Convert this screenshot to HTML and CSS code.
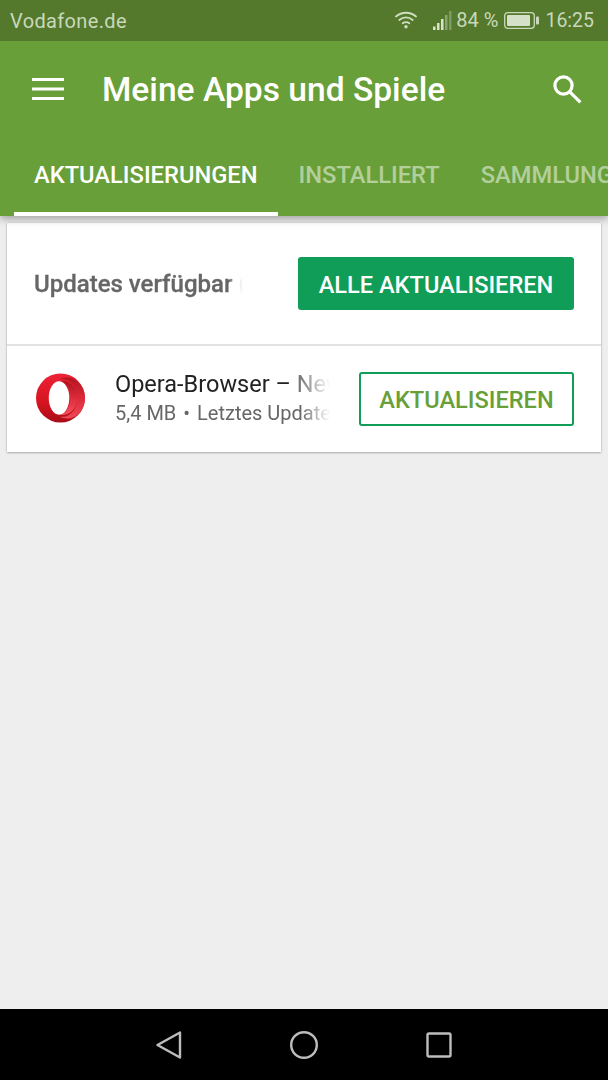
FILE: index.html
```html
<!DOCTYPE html>
<html lang="de">
<head>
<meta charset="utf-8">
<title>Meine Apps und Spiele</title>
<link rel="stylesheet" href="styles.css">
</head>
<body>
<div class="screen">
  <header class="header">
    <div class="status">
      <span class="carrier">Vodafone.de</span>
      <div class="status-right">
        <svg class="wifi" width="22" height="18" viewBox="0 0 22 18" fill="none" stroke="#d0dec2" stroke-width="1.800" stroke-linecap="round">
          <path d="M1 5.500C6.500 .5 15.500 .5 21 5.500"/>
          <path d="M4.300 9C8.300 5.500 13.700 5.500 17.700 9"/>
          <path d="M7.700 12.300C9.700 10.800 12.300 10.800 14.300 12.300"/>
          <circle cx="11" cy="15.800" r="1.700" fill="#d0dec2" stroke="none"/>
        </svg>
        <svg class="signal" width="19" height="19" viewBox="0 0 19 19">
          <rect x="0" y="15.500" width="2.500" height="3.500" fill="#d8e3cc"/>
          <rect x="4" y="12" width="2.500" height="7" fill="#d8e3cc"/>
          <rect x="8" y="8" width="2.500" height="11" fill="#d8e3cc"/>
          <rect x="12" y="4" width="2.500" height="15" fill="#8aa574"/>
          <rect x="16" y="0" width="2.500" height="19" fill="#7d9b66"/>
        </svg>
        <span class="pct">84 %</span>
        <svg class="battery" width="35" height="17" viewBox="0 0 35 17">
          <rect x="0.700" y="0.700" width="29.600" height="15.600" rx="3" fill="none" stroke="#c9d8ba" stroke-width="1.300"/>
          <rect x="3" y="3" width="23" height="11" rx="1" fill="#d4e0c8"/>
          <rect x="32" y="4.500" width="3" height="8" rx="1" fill="#c9d8ba"/>
        </svg>
        <span class="time">16:25</span>
      </div>
    </div>
    <div class="appbar">
      <svg class="menu" width="32" height="22" viewBox="0 0 32 22" fill="#fff">
        <rect x="0" y="0" width="32" height="3"/>
        <rect x="0" y="9.500" width="32" height="3"/>
        <rect x="0" y="19" width="32" height="3"/>
      </svg>
      <h1 class="title">Meine Apps und Spiele</h1>
      <svg class="search" width="30" height="30" viewBox="0 0 30 30" fill="none" stroke="#fff" stroke-width="3.200">
        <circle cx="11.500" cy="11.500" r="8.600"/>
        <path d="M17.800 17.800L28.400 28.400"/>
      </svg>
    </div>
    <nav class="tabs">
      <span class="tab tab-active">AKTUALISIERUNGEN</span>
      <span class="tab">INSTALLIERT</span>
      <span class="tab">SAMMLUNG</span>
    </nav>
  </header>

  <main class="content">
    <section class="card">
      <div class="card-head">
        <span class="avail fade-short">Updates verfügbar (1)</span>
        <button class="btn btn-solid">ALLE AKTUALISIEREN</button>
      </div>
      <div class="row">
        <svg class="opera" width="49" height="50" viewBox="0 0 50 50">
          <defs>
            <linearGradient id="og" x1="0" y1="0" x2="0" y2="1">
              <stop offset="0" stop-color="#ee2238"/>
              <stop offset="0.600" stop-color="#d5141f"/>
              <stop offset="1" stop-color="#a80d18"/>
            </linearGradient>
            <linearGradient id="og2" x1="0" y1="0" x2="0" y2="1">
              <stop offset="0" stop-color="#ad121d"/>
              <stop offset="0.500" stop-color="#dc2c3c"/>
              <stop offset="1" stop-color="#f4505e"/>
            </linearGradient>
          </defs>
          <circle cx="25" cy="25" r="25" fill="url(#og)"/>
          <path d="M24 6C35 4 42 14 42 25C42 36 35 46 24 44C38 51 50 38.500 50 25C50 11.500 38 -1 24 6Z" fill="url(#og2)" opacity=".9"/>
          <path d="M24 8C30 9 35 16 35 25C35 34 30 41 24 42C35 44 42 35 42 25C42 15 35 6 24 8Z" fill="url(#og2)"/>
          <ellipse cx="23.500" cy="25" rx="10.500" ry="17" fill="#fff"/>
        </svg>
        <div class="info">
          <div class="name fade">Opera-Browser – <span class="name-rest">News &amp; Suche</span></div>
          <div class="meta fade">5,4 MB<span class="dot">•</span>Letztes Update: heute</div>
        </div>
        <button class="btn btn-outline">AKTUALISIEREN</button>
      </div>
    </section>
  </main>

  <footer class="navbar">
    <svg width="26" height="28" viewBox="0 0 26 28" fill="none" stroke="#bdbdbd" stroke-width="2.400" stroke-linejoin="round"><path d="M24 1.500V26.500L1.500 14Z"/></svg>
    <svg width="28" height="28" viewBox="0 0 28 28" fill="none" stroke="#bdbdbd" stroke-width="2.400"><circle cx="14" cy="14" r="12.800"/></svg>
    <svg width="26" height="26" viewBox="0 0 26 26" fill="none" stroke="#bdbdbd" stroke-width="2.400" stroke-linejoin="round"><rect x="1.500" y="1.500" width="23" height="23" rx="1.500"/></svg>
  </footer>
</div>
</body>
</html>
```

FILE: styles.css
```css
* { box-sizing: border-box; }
html, body { margin: 0; padding: 0; }
body { font-family: Roboto, "Liberation Sans", sans-serif; background: #eeeeee; }
.screen { width: 608px; height: 1080px; display: flex; flex-direction: column; overflow: hidden; }

.header { background: #689f38; height: 216px; display: flex; flex-direction: column; position: relative; z-index: 1; box-shadow: 0 3px 8px rgba(0,0,0,.32); }
.status { height: 41px; background: #54792d; display: flex; align-items: center; justify-content: space-between; padding: 0 14px 0 10px; color: #c9d8ba; font-size: 20px; flex: none; }
.carrier { letter-spacing: .35px; }
.status-right { display: flex; align-items: center; }
.wifi { margin-right: 16px; margin-top: -1px; }
.signal { margin-right: 4px; margin-top: -1px; }
.pct { margin-right: 6px; margin-top: -2px; }
.battery { margin-right: 6px; }
.time { font-size: 19.500px; }

.appbar { height: 95px; display: flex; align-items: center; padding: 0 26px 0 32px; flex: none; }
.menu { flex: none; margin-right: 38px; }
.title { flex: 1; margin: 0; padding-top: 1px; font-size: 33.600px; font-weight: 500; color: #fff; white-space: nowrap; }
.search { flex: none; }

.tabs { flex: 1; display: flex; padding-left: 14px; white-space: nowrap; overflow: hidden; }
.tab { display: flex; align-items: center; padding: 0 20px 2px; font-size: 23.700px; font-weight: 500; color: rgba(255,255,255,.5); }
.tab + .tab { margin-left: 1px; }
.tab-active { color: #fff; border-bottom: 4px solid #fff; padding-top: 2px; padding-bottom: 0; }

.content { flex: 1; padding: 7px 7px 0; }
.card { background: #fff; box-shadow: 0 1px 2px rgba(0,0,0,.25), 0 0 2px rgba(0,0,0,.12); }
.card-head { height: 123px; display: flex; align-items: center; justify-content: space-between; padding: 0 27px; border-bottom: 2px solid #e2e2e2; }
.avail { width: 209px; font-size: 24px; font-weight: 500; -webkit-text-stroke: .3px #666; color: #666; white-space: nowrap; overflow: hidden; }
.fade { -webkit-mask-image: linear-gradient(to right, #000 calc(100% - 30px), transparent 100%); mask-image: linear-gradient(to right, #000 calc(100% - 30px), transparent 100%); }
.fade-short { -webkit-mask-image: linear-gradient(to right, #000 calc(100% - 14px), rgba(0,0,0,.25) calc(100% - 6px), transparent 100%); mask-image: linear-gradient(to right, #000 calc(100% - 14px), rgba(0,0,0,.25) calc(100% - 6px), transparent 100%); }

.btn { font-family: inherit; font-size: 23.600px; font-weight: 500; border-radius: 3px; white-space: nowrap; padding: 2px 0 0; }
.btn-solid { width: 276px; height: 53px; background: #0f9d58; border: 0; color: #fff; }
.btn-outline { width: 215px; height: 54px; background: #fff; border: 2px solid #0f9d58; color: #689f38; flex: none; margin-top: -1px; }

.row { height: 106px; display: flex; align-items: center; padding: 0 27px 0 29px; }
.opera { flex: none; margin-right: 30px; margin-top: -3px; }
.info { width: 215px; margin-right: 29px; margin-top: -1px; overflow: hidden; }
.name { font-size: 23.500px; color: #222; white-space: nowrap; overflow: hidden; line-height: 29px; }
.name-rest { color: #777; }
.meta { font-size: 20px; color: #666; white-space: nowrap; overflow: hidden; line-height: 28px; }
.dot { margin: 0 7px; }

.navbar { height: 71px; background: #000; display: flex; align-items: center; padding: 0 156px; justify-content: space-between; flex: none; }
```
